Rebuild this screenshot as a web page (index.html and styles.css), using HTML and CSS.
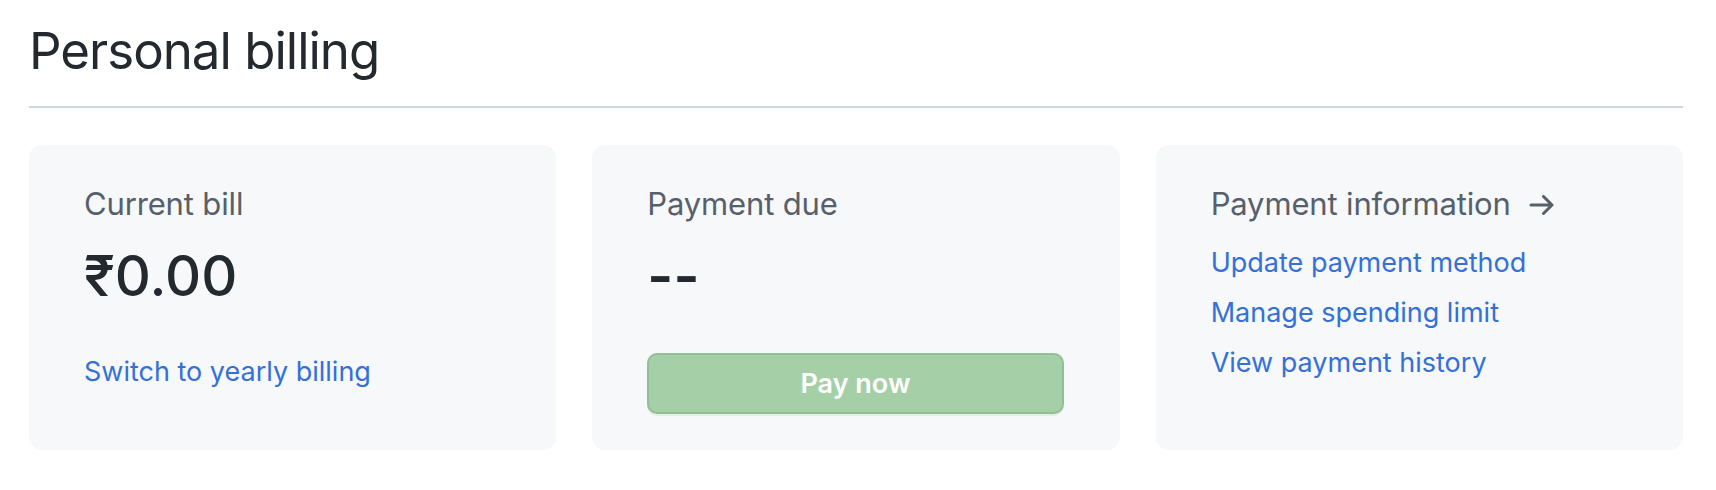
FILE: index.html
```
<!DOCTYPE html>
<html lang="en">
<head>
<meta charset="utf-8">
<title>Personal billing</title>
<link rel="stylesheet" href="styles.css">
</head>
<body>
<main class="page">
  <h2 class="title">Personal billing</h2>
  <section class="cards">
    <div class="card">
      <div class="label">Current bill</div>
      <div class="amount">₹0.00</div>
      <a class="link switch" href="#">Switch to yearly billing</a>
    </div>
    <div class="card">
      <div class="label">Payment due</div>
      <div class="amount dashes">--</div>
      <button class="pay" type="button" disabled>Pay now</button>
    </div>
    <div class="card">
      <a class="label label-link" href="#">Payment information
        <svg class="arrow" width="26" height="20" viewBox="0 0 26 20" aria-hidden="true"><path d="M2 10H23M14.5 1.5L23 10L14.5 18.5" fill="none" stroke="#57606a" stroke-width="3" stroke-linecap="round" stroke-linejoin="round"/></svg>
      </a>
      <ul class="links">
        <li><a class="link" href="#">Update payment method</a></li>
        <li><a class="link" href="#">Manage spending limit</a></li>
        <li><a class="link" href="#">View payment history</a></li>
      </ul>
    </div>
  </section>
</main>
</body>
</html>
```
FILE: styles.css
```
* { box-sizing: border-box; }
html, body { margin: 0; background: #ffffff; }
body {
  font-family: Inter, "Noto Sans", "Liberation Sans", sans-serif;
  color: #24292f;
}
.page {
  padding: 0 33px 0 29px;
}
.title {
  margin: 0;
  padding-top: 16px;
  font-size: 51px;
  font-weight: 400;
  letter-spacing: -1px;
  line-height: 70px;
  padding-bottom: 20px;
  border-bottom: 2px solid #d0d7de;
  color: #24292f;
}
.cards {
  margin-top: 37px;
  display: grid;
  grid-template-columns: repeat(3, 1fr);
  gap: 36px;
}
.card {
  background: #f6f8fa;
  border-radius: 13px;
  height: 305px;
  padding: 39px 56px 0 55px;
  display: flex;
  flex-direction: column;
  align-items: flex-start;
}
.label {
  font-size: 31px;
  line-height: 40px;
  letter-spacing: -0.15px;
  color: #57606a;
  text-decoration: none;
  display: flex;
  align-items: center;
  gap: 18px;
}
.arrow { display: block; margin-top: 1px; }
.amount {
  margin-top: 20px;
  font-size: 56px;
  line-height: 64px;
  font-weight: 500;
  color: #24292f;
}
.dashes { font-weight: 600; }
.link {
  font-size: 27px;
  line-height: 40px;
  color: #3470d8;
  text-decoration: none;
}
.switch { margin-top: 44px; }
.pay {
  margin-top: 45px;
  width: 100%;
  height: 61px;
  border: 2px solid #92c095;
  border-radius: 10px;
  background: #a5cfa6;
  color: #ffffff;
  font-family: inherit;
  font-size: 27px;
  font-weight: 600;
  box-shadow: 0 2px 0 rgba(27, 31, 36, 0.06);
  padding: 0;
}
.links {
  list-style: none;
  margin: 14px 0 0;
  padding: 0;
}
.links li { font-size: 27px; line-height: 50px; }
.links .link { display: block; line-height: 50px; }
```
